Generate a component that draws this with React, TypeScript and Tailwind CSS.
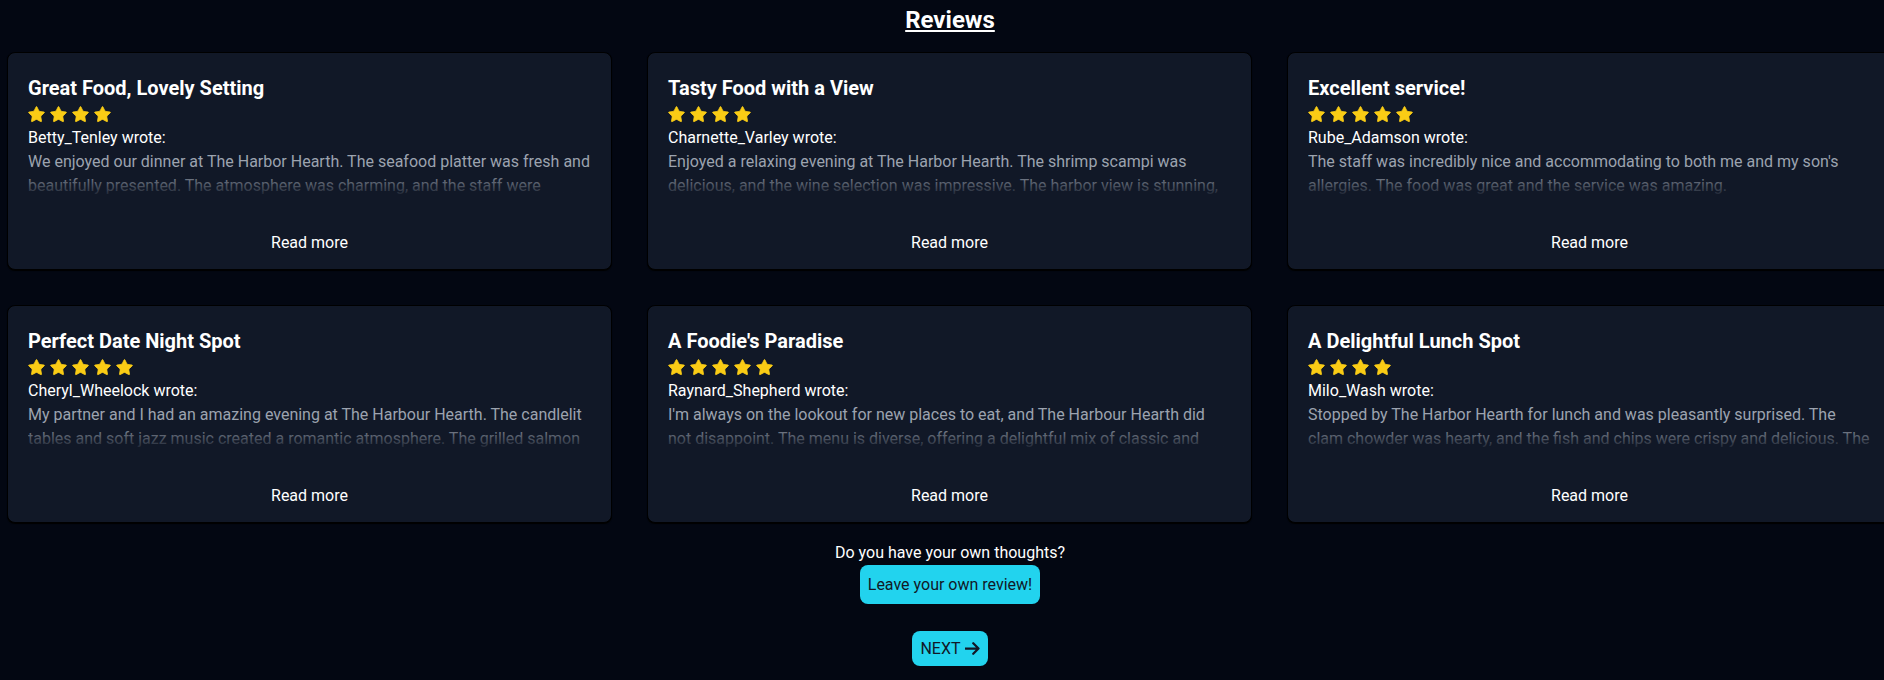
import React from "react";

type Review = { title: string; stars: number; author: string; body: string };

const reviews: Review[] = [
  {
    title: "Great Food, Lovely Setting",
    stars: 4,
    author: "Betty_Tenley",
    body: "We enjoyed our dinner at The Harbor Hearth. The seafood platter was fresh and beautifully presented. The atmosphere was charming, and the staff were attentive and friendly. We will definitely be back!",
  },
  {
    title: "Tasty Food with a View",
    stars: 4,
    author: "Charnette_Varley",
    body: "Enjoyed a relaxing evening at The Harbor Hearth. The shrimp scampi was delicious, and the wine selection was impressive. The harbor view is stunning, especially at sunset.",
  },
  {
    title: "Excellent service!",
    stars: 5,
    author: "Rube_Adamson",
    body: "The staff was incredibly nice and accommodating to both me and my son's allergies. The food was great and the service was amazing.",
  },
  {
    title: "Perfect Date Night Spot",
    stars: 5,
    author: "Cheryl_Wheelock",
    body: "My partner and I had an amazing evening at The Harbour Hearth. The candlelit tables and soft jazz music created a romantic atmosphere. The grilled salmon was cooked to perfection.",
  },
  {
    title: "A Foodie's Paradise",
    stars: 5,
    author: "Raynard_Shepherd",
    body: "I'm always on the lookout for new places to eat, and The Harbour Hearth did not disappoint. The menu is diverse, offering a delightful mix of classic and modern dishes.",
  },
  {
    title: "A Delightful Lunch Spot",
    stars: 4,
    author: "Milo_Wash",
    body: "Stopped by The Harbor Hearth for lunch and was pleasantly surprised. The clam chowder was hearty, and the fish and chips were crispy and delicious. The service was quick and friendly.",
  },
];

function Star() {
  return (
    <svg
      width="19"
      height="19"
      viewBox="0 0 24 24"
      fill="#facc15"
      stroke="#facc15"
      strokeWidth="1"
      strokeLinejoin="round"
      strokeLinecap="round"
    >
      <path d="M11.525 2.295a.53.53 0 0 1 .95 0l2.31 4.679a2.123 2.123 0 0 0 1.595 1.16l5.166.756a.53.53 0 0 1 .294.904l-3.736 3.638a2.123 2.123 0 0 0-.611 1.878l.882 5.14a.53.53 0 0 1-.771.56l-4.618-2.428a2.122 2.122 0 0 0-1.973 0L6.396 21.01a.53.53 0 0 1-.77-.56l.881-5.139a2.122 2.122 0 0 0-.611-1.879L2.16 9.795a.53.53 0 0 1 .294-.906l5.165-.755a2.122 2.122 0 0 0 1.597-1.16z" />
    </svg>
  );
}

function Card({ r }: { r: Review }) {
  return (
    <div className="w-[605px] h-[218px] shrink-0 flex flex-col rounded-lg border border-black bg-[#111827] shadow-[0_1px_1px_#000] px-5 pt-[21px] pb-[6px]">
      <h3 className="text-[20px] leading-[28px] font-bold text-white">{r.title}</h3>
      <div className="flex items-center h-6 gap-[3px] -ml-[1px]">
        {Array.from({ length: r.stars }).map((_, i) => (
          <Star key={i} />
        ))}
      </div>
      <p className="text-base leading-6 font-normal text-white">{r.author} wrote:</p>
      <div className="relative h-[48px] overflow-hidden mb-[25px]">
        <p className="text-base leading-6 text-[#9ca3af]">{r.body}</p>
        <div className="absolute inset-0 bg-gradient-to-b from-transparent from-[40%] to-[#111827]" />
      </div>
      <button className="h-10 text-base leading-6 text-white text-center">Read more</button>
    </div>
  );
}

export default function App() {
  return (
    <div className="w-full h-screen overflow-hidden bg-[#030712] font-['Roboto',sans-serif]">
      <div className="w-[1900px] flex flex-col items-center pt-1">
        <h2 className="h-8 text-2xl leading-8 font-bold text-white underline mb-4">Reviews</h2>
        <div className="grid grid-cols-[605px_605px_605px] gap-x-[35px] gap-y-[35px] -ml-[1px]">
          {reviews.map((r, i) => (
            <Card key={i} r={r} />
          ))}
        </div>
        <p className="mt-[18px] text-base leading-6 text-white">Do you have your own thoughts?</p>
        <button className="h-[39px] px-2 rounded-lg bg-[#22d3ee] text-base leading-6 text-[#111827]">
          Leave your own review!
        </button>
        <button className="mt-[27px] h-[35px] px-2 rounded-lg bg-[#22d3ee] flex items-center gap-[4px] text-base leading-6 text-[#111827]">
          NEXT
          <svg width="15" height="15" viewBox="2 2 20 20" fill="none" stroke="#111827" strokeWidth="3" strokeLinecap="round" strokeLinejoin="round">
            <path d="M13 5l7 7m0 0l-7 7m7-7H3" />
          </svg>
        </button>
      </div>
    </div>
  );
}
